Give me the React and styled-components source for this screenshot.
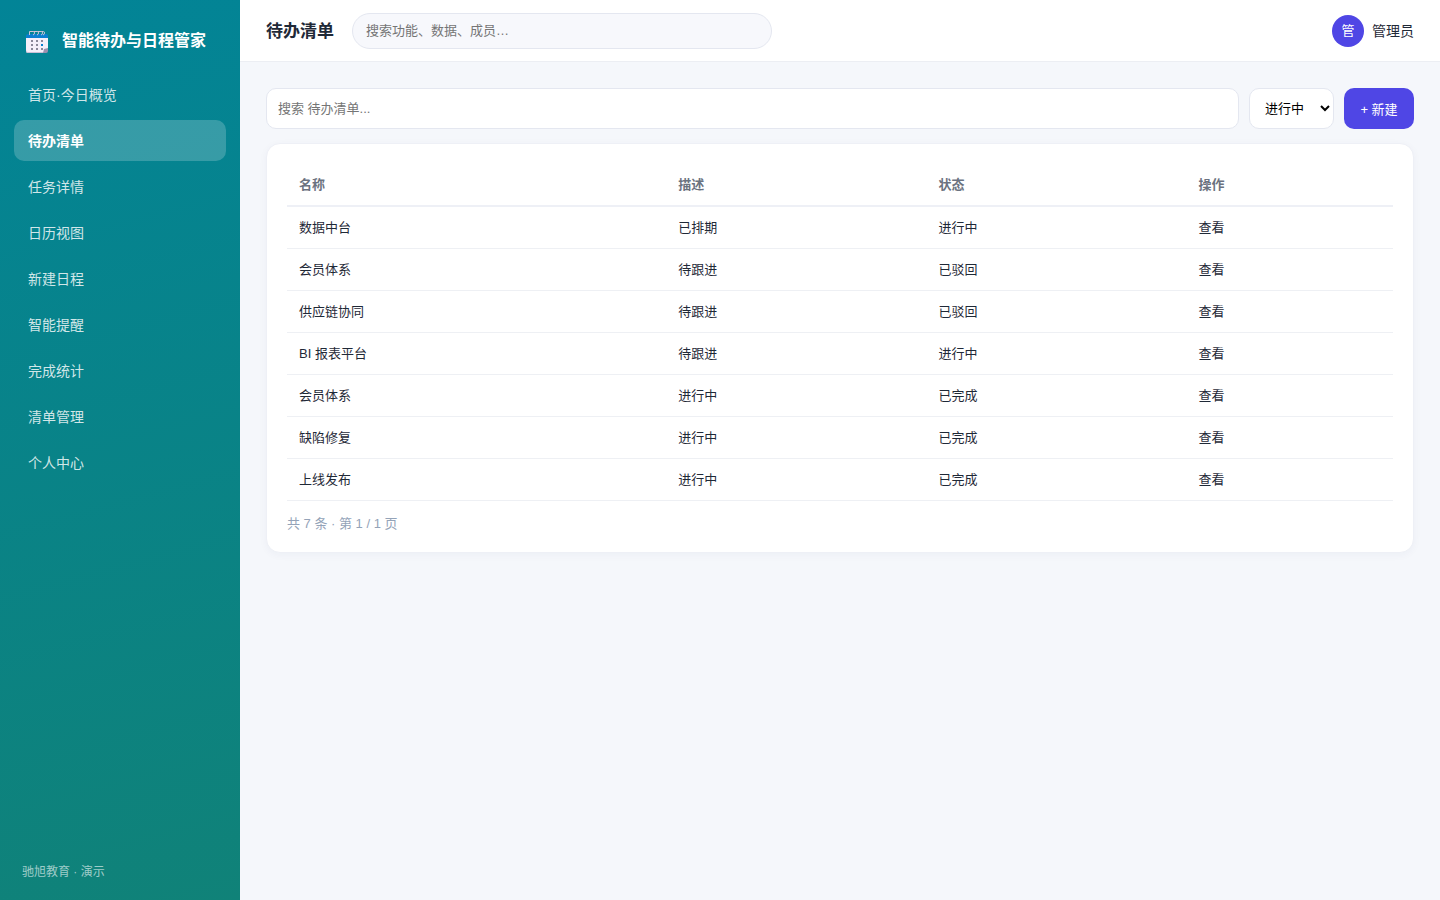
import React, { useState } from 'react'
import styled, { createGlobalStyle, css } from 'styled-components'

const fontStack = `'Liberation Sans', 'Noto Sans CJK SC', sans-serif`

const GlobalStyle = createGlobalStyle`
  *,
  *::before,
  *::after {
    box-sizing: border-box;
  }
  body {
    margin: 0;
    color: #1f2937;
    background-color: #f5f7fb;
    font-family: ${fontStack};
    font-size: 14px;
  }
  button,
  input,
  select {
    font-family: inherit;
  }
`

const Layout = styled.div`
  display: flex;
  min-height: 100vh;
`

const Sidebar = styled.aside`
  display: flex;
  flex-direction: column;
  flex: 0 0 240px;
  padding: 23px 14px 20px;
  color: white;
  background: linear-gradient(165deg, #028497, #108278);
`
const Brand = styled.div`
  display: flex;
  align-items: center;
  gap: 10px;
  padding: 0 8px;
  margin-bottom: 15px;
  font-size: 16px;
  font-weight: 700;
  line-height: 20px;
  white-space: nowrap;
`
const Nav = styled.nav`
  display: flex;
  flex-direction: column;
  gap: 5px;
`
const NavLink = styled.a`
  padding: 12px 14px 10px;
  border-radius: 10px;
  color: rgba(255, 255, 255, 0.82);
  font-size: 14px;
  line-height: 19px;
  text-decoration: none;

  ${props =>
    props.$active &&
    css`
      color: white;
      font-weight: 700;
      background-color: rgba(255, 255, 255, 0.2);
    `}
`
const SidebarFooter = styled.div`
  margin-top: auto;
  padding: 0 8px;
  color: rgba(255, 255, 255, 0.6);
  font-size: 12px;
  line-height: 16px;
`

const Main = styled.div`
  flex: 1;
  min-width: 0;
`
const Topbar = styled.header`
  display: flex;
  align-items: center;
  gap: 18px;
  padding: 12px 26px;
  min-height: 62px;
  border-bottom: 1px solid #eceef3;
  background-color: white;
`
const PageTitle = styled.h1`
  margin: 0;
  padding-top: 2px;
  font-size: 17px;
  font-weight: 700;
  line-height: 20px;
  white-space: nowrap;
`
const GlobalSearch = styled.input`
  flex: 0 1 420px;
  min-width: 0;
  height: 36px;
  padding: 0 13px;
  border: 1px solid #e4e7f0;
  border-radius: 18px;
  background-color: #f7f8fc;
  font-size: 13px;
`
const User = styled.div`
  display: flex;
  align-items: center;
  gap: 8px;
  margin-left: auto;
  line-height: 20px;
  white-space: nowrap;
`
const Avatar = styled.span`
  display: flex;
  align-items: center;
  justify-content: center;
  width: 32px;
  height: 32px;
  border-radius: 50%;
  color: white;
  background-color: #4f46e5;
  font-size: 13px;
`

const Content = styled.main`
  padding: 26px;
`
const Toolbar = styled.div`
  display: flex;
  gap: 10px;
  margin-bottom: 14px;
`
const control = css`
  height: 41px;
  border: 1px solid #e4e7f0;
  border-radius: 10px;
  background-color: white;
  font-size: 13px;
`
const ListSearch = styled.input`
  ${control}
  flex: 1;
  min-width: 0;
  padding: 0 11px;
`
const StatusSelect = styled.select`
  ${control}
  width: 85px;
  padding: 0 0 0 11px;
  color: black;
`
const CreateButton = styled.button`
  ${control}
  min-width: 70px;
  padding: 0 16px;
  border: 0;
  color: white;
  background-color: #4f46e5;
  white-space: nowrap;
  cursor: pointer;
`

const Card = styled.section`
  padding: 20px;
  border: 1px solid #eef0f6;
  border-radius: 14px;
  background-color: white;
  box-shadow: 0 2px 8px rgba(30, 41, 90, 0.04);
`
const Table = styled.table`
  width: 100%;
  border-collapse: separate;
  border-spacing: 0;
  font-size: 13px;
  line-height: 17px;
  text-align: left;
`
const HeadCell = styled.th`
  padding: 12px;
  border-bottom: 2px solid #eef0f6;
  color: #6b7280;
  font-weight: 700;
`
const Cell = styled.td`
  padding: 12px;
  border-bottom: 1px solid #eef0f4;
`
const Pagination = styled.div`
  margin-top: 14px;
  color: #94a3b8;
  font-size: 13px;
  line-height: 17px;
`

const navItems = [
  '首页·今日概览',
  '待办清单',
  '任务详情',
  '日历视图',
  '新建日程',
  '智能提醒',
  '完成统计',
  '清单管理',
  '个人中心'
]

const columns = ['名称', '描述', '状态', '操作']

const rows = [
  ['数据中台', '已排期', '进行中'],
  ['会员体系', '待跟进', '已驳回'],
  ['供应链协同', '待跟进', '已驳回'],
  ['BI 报表平台', '待跟进', '进行中'],
  ['会员体系', '进行中', '已完成'],
  ['缺陷修复', '进行中', '已完成'],
  ['上线发布', '进行中', '已完成']
]

const CalendarIcon = () => (
  <svg width="30" height="36" viewBox="0 1 30 36" aria-hidden="true">
    <path d="M4 15h22v12l-5 4H6a2 2 0 0 1-2-2z" fill="#f5effa" />
    <path d="M4 27v2a2 2 0 0 0 2 2h15v-1H6q-2 0-2-3z" fill="#cbbfd6" />
    <path d="M26 26v3a2 2 0 0 1-2 2h-3l1-4z" fill="#9b8fae" />
    <path d="M4 16v-2a2 2 0 0 1 2-2h18a2 2 0 0 1 2 2v2z" fill="#0a7fd0" />
    <g fill="none" stroke="#c9c3d6" strokeWidth="1">
      <path d="M7.500 13v-3.500h4q1 0 1 1.500t-1.500 2" />
      <path d="M11.500 9.500h4q1 0 1 1.500t-1.500 2" />
      <path d="M15.500 9.500h4q1 0 1 1.500t-1.500 2" />
      <path d="M19.500 9.500h2q1 0 1 1.500t-1.500 2" />
    </g>
    <g fill="#8b8799">
      <path d="M9 18h2v2H9zM14 18h2v2h-2zM19 18h2v2h-2z" />
      <path d="M9 22h2v2H9zM14 22h2v2h-2z" />
      <path d="M9 26h2v2H9zM14 26h2v2h-2zM19 26h2v2h-2z" />
    </g>
    <path d="M19 22h2v2h-2z" fill="#0a7fd0" />
  </svg>
)

const App = () => {
  const [status, setStatus] = useState('进行中')

  return (
    <>
      <GlobalStyle />
      <Layout>
        <Sidebar>
          <Brand>
            <CalendarIcon />
            <span>智能待办与日程管家</span>
          </Brand>
          <Nav>
            {navItems.map(item => (
              <NavLink key={item} href="#" $active={item === '待办清单'}>
                {item}
              </NavLink>
            ))}
          </Nav>
          <SidebarFooter>驰旭教育 · 演示</SidebarFooter>
        </Sidebar>
        <Main>
          <Topbar>
            <PageTitle>待办清单</PageTitle>
            <GlobalSearch
              type="text"
              aria-label="搜索"
              placeholder="搜索功能、数据、成员…"
            />
            <User>
              <Avatar>管</Avatar>
              <span>管理员</span>
            </User>
          </Topbar>
          <Content>
            <Toolbar>
              <ListSearch
                type="text"
                aria-label="搜索待办清单"
                placeholder="搜索 待办清单..."
              />
              <StatusSelect
                aria-label="状态"
                value={status}
                onChange={e => setStatus(e.target.value)}
              >
                <option>进行中</option>
                <option>已完成</option>
                <option>已驳回</option>
              </StatusSelect>
              <CreateButton type="button">+ 新建</CreateButton>
            </Toolbar>
            <Card>
              <Table>
                <thead>
                  <tr>
                    {columns.map(column => (
                      <HeadCell key={column}>{column}</HeadCell>
                    ))}
                  </tr>
                </thead>
                <tbody>
                  {rows.map((row, i) => (
                    <tr key={i}>
                      {row.map((text, j) => (
                        <Cell key={j}>{text}</Cell>
                      ))}
                      <Cell>查看</Cell>
                    </tr>
                  ))}
                </tbody>
              </Table>
              <Pagination>共 7 条 · 第 1 / 1 页</Pagination>
            </Card>
          </Content>
        </Main>
      </Layout>
    </>
  )
}

export default App
